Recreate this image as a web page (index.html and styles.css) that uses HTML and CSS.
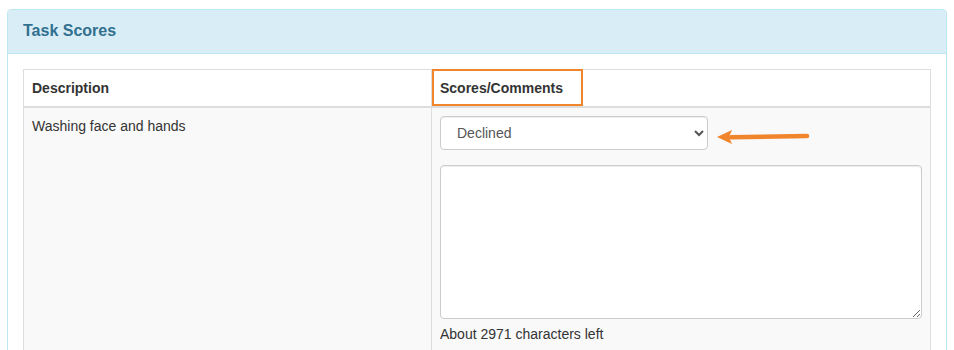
FILE: index.html
```html
<!DOCTYPE html>
<html lang="en">
<head>
  <meta charset="UTF-8" />
  <meta name="viewport" content="width=device-width, initial-scale=1" />
  <title>Task Scores</title>
  <link rel="stylesheet" href="styles.css">
</head>
<body>
  <div class="panel">
    <div class="panel-heading">
      <h3 class="panel-title">Task Scores</h3>
    </div>
    <div class="panel-body">
      <table class="score-table">
        <thead>
          <tr>
            <th class="col-desc">Description</th>
            <th class="col-score">
              Scores/Comments
              <span class="highlight-box"></span>
            </th>
          </tr>
        </thead>
        <tbody>
          <tr>
            <td>Washing face and hands</td>
            <td>
              <div class="select-row">
                <select class="form-control score-select">
                  <option>Declined</option>
                  <option>Independent</option>
                  <option>Needs help</option>
                </select>
                <svg class="pointer-arrow" width="94" height="16" viewBox="0 0 94 16">
                  <path d="M15 8.2 L91 7" stroke="#f0852b" stroke-width="4.5" stroke-linecap="round" fill="none"/>
                  <path d="M1 8 L16 1 L13 8 L16 15 Z" fill="#f0852b"/>
                </svg>
              </div>
              <textarea class="form-control comment-box"></textarea>
              <div class="char-count">About 2971 characters left</div>
            </td>
          </tr>
        </tbody>
      </table>
    </div>
  </div>
</body>
</html>
```

FILE: styles.css
```css
* {
  box-sizing: border-box;
}
body {
  margin: 0;
  padding: 9px 7px;
  font-family: "Liberation Sans", Arial, sans-serif;
  font-size: 14px;
  line-height: 20px;
  color: #333;
  background: #fff;
}
.panel {
  width: 940px;
  border: 1px solid #bce8f1;
  border-radius: 4px;
  background: #fff;
}
.panel-heading {
  padding: 9px 15px 11px;
  background-color: #d9edf7;
  border-bottom: 1px solid #bce8f1;
  border-radius: 3px 3px 0 0;
  color: #31708f;
}
.panel-title {
  margin: 0;
  font-size: 16px;
  line-height: 23px;
  font-weight: bold;
}
.panel-body {
  padding: 15px;
}
.score-table {
  width: 100%;
  border-collapse: collapse;
  border: 1px solid #ddd;
}
.score-table th,
.score-table td {
  border: 1px solid #ddd;
  padding: 8px;
  text-align: left;
  vertical-align: top;
}
.score-table th {
  border-bottom-width: 2px;
  font-weight: bold;
}
.col-desc {
  width: 409px;
}
.col-score {
  position: relative;
}
/* annotation box drawn over the header */
.highlight-box {
  position: absolute;
  left: 0;
  top: -1px;
  width: 151px;
  height: 37px;
  border: 2px solid #f0852b;
  pointer-events: none;
}
.score-table tbody tr {
  background-color: #f9f9f9;
}
.form-control {
  display: block;
  font-family: inherit;
  font-size: 14px;
  color: #555;
  background: #fff;
  border: 1px solid #ccc;
  border-radius: 4px;
  box-shadow: inset 0 1px 1px rgba(0, 0, 0, 0.075);
}
.select-row {
  display: flex;
  align-items: flex-start;
  gap: 8px;
}
.score-select {
  width: 268px;
  height: 34px;
  padding: 6px 12px;
}
.pointer-arrow {
  display: block;
  margin-top: 13px;
}
.comment-box {
  width: 482px;
  height: 154px;
  margin-top: 15px;
  padding: 6px 12px;
}
.char-count {
  margin-top: 5px;
  color: #333;
}
```
